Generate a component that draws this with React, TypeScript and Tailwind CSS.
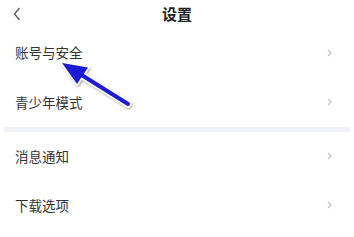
import React from "react";

const font = { fontFamily: '"Noto Sans CJK SC", "Noto Sans", sans-serif' };

function Chevron() {
  return (
    <svg width="5" height="8" viewBox="0 0 5 8" className="shrink-0">
      <path d="M1 1 L4 4 L1 7" fill="none" stroke="#c0c0c0" strokeWidth="1.1" />
    </svg>
  );
}

function Row({ label, h }: { label: string; h: string }) {
  return (
    <div className={`flex items-center justify-between pl-[15px] pr-[22px] ${h}`}>
      <span className="text-[13.5px] text-[#333333]">{label}</span>
      <Chevron />
    </div>
  );
}

export default function App() {
  return (
    <div className="relative w-[354px] h-[237px] bg-white overflow-hidden" style={font}>
      <div className="relative flex items-center justify-center h-[28px] pt-[1px]">
        <svg width="8" height="14" viewBox="0 0 8 14" className="absolute left-[13px] top-[7px]">
          <path d="M6.5 1 L1.5 7 L6.5 13" fill="none" stroke="#555" strokeWidth="1.3" />
        </svg>
        <span className="text-[15px] font-bold text-[#222]">设置</span>
      </div>
      <Row label="账号与安全" h="h-[49px]" />
      <Row label="青少年模式" h="h-[50px]" />
      <div className="h-[5px] mx-[4px] bg-[#f1f2f6]" />
      <Row label="消息通知" h="h-[48px]" />
      <Row label="下载选项" h="h-[50px]" />
      <svg className="absolute left-0 top-0 pointer-events-none" width="354" height="237">
        <defs>
          <filter id="sh" x="-20%" y="-20%" width="140%" height="140%">
            <feDropShadow dx="1" dy="1.5" stdDeviation="1.2" floodColor="#000" floodOpacity="0.35" />
          </filter>
        </defs>
        <g filter="url(#sh)">
          <line x1="128" y1="104" x2="80" y2="74" stroke="#ffffff" strokeWidth="7" strokeLinecap="round" />
          <polygon points="62,63 88,67.5 77,84" fill="#ffffff" stroke="#ffffff" strokeWidth="3" strokeLinejoin="round" />
          <line x1="128" y1="104" x2="80" y2="74" stroke="#1a1ad4" strokeWidth="4" strokeLinecap="round" />
          <polygon points="62,63 88,67.5 77,84" fill="#1a1ad4" />
        </g>
      </svg>
    </div>
  );
}
